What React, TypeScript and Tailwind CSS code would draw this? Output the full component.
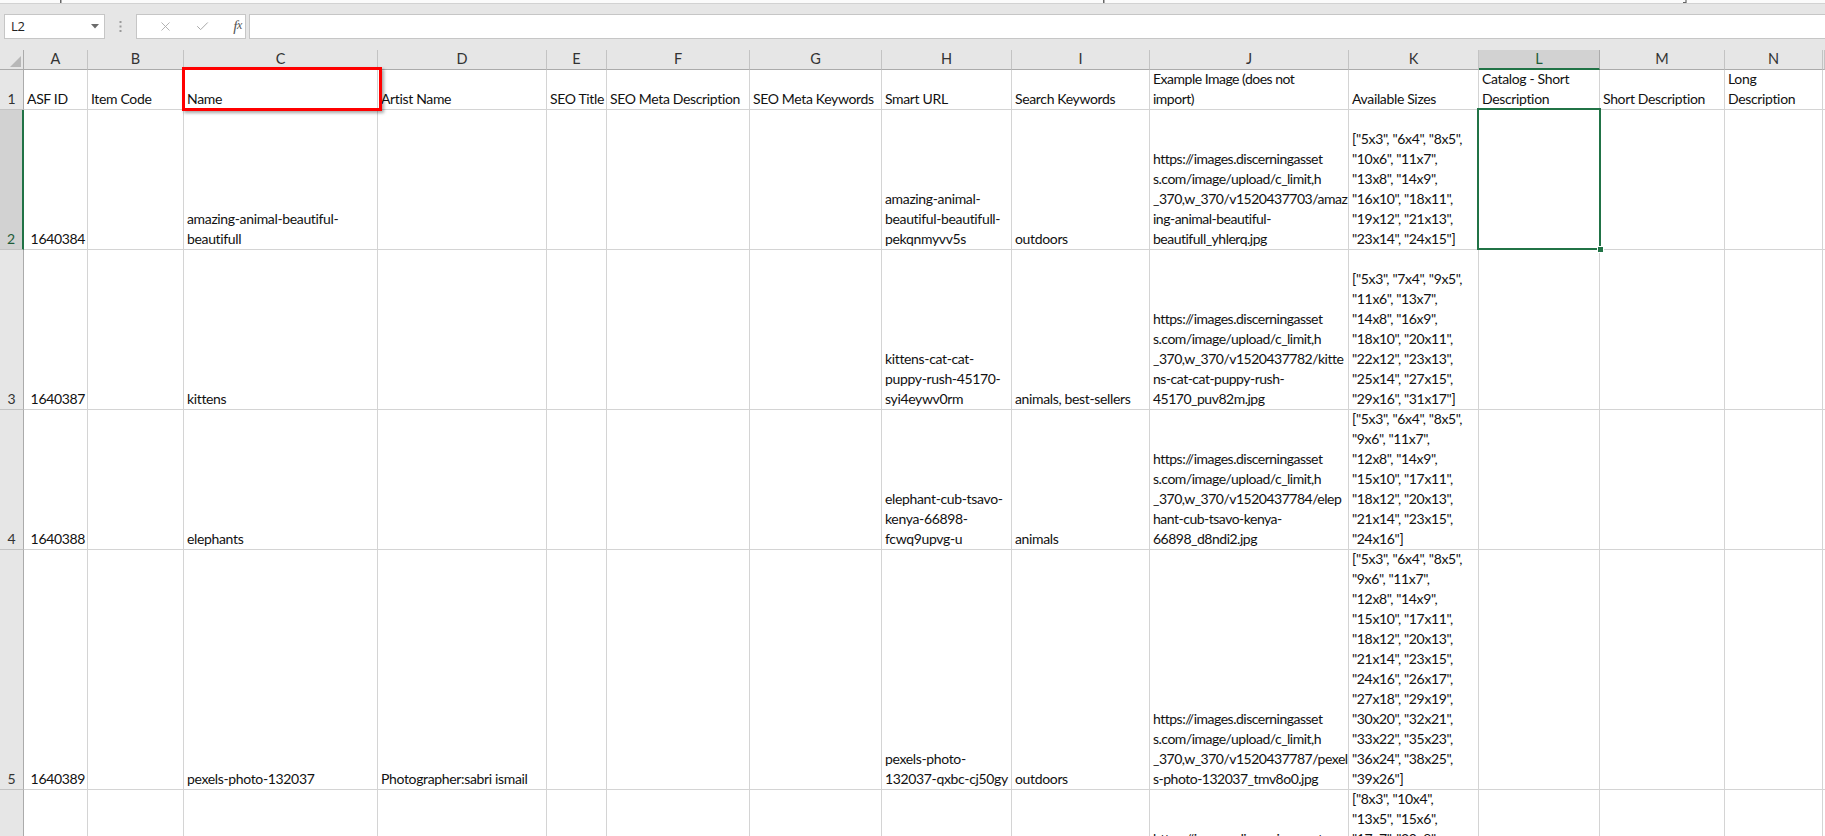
import React from "react";
import { X, Check } from "lucide-react";

type Cell = { lines: string[]; right?: boolean };
type Row = { label: string; height: string; cells: Record<number, Cell> };

const LETTERS = ["A", "B", "C", "D", "E", "F", "G", "H", "I", "J", "K", "L", "M", "N", ""];

const ROWS: Row[] = [
  {
    label: "1",
    height: "h-[40px]",
    cells: {
      0: { lines: ["ASF ID"] },
      1: { lines: ["Item Code"] },
      2: { lines: ["Name"] },
      3: { lines: ["Artist Name"] },
      4: { lines: ["SEO Title"] },
      5: { lines: ["SEO Meta Description"] },
      6: { lines: ["SEO Meta Keywords"] },
      7: { lines: ["Smart URL"] },
      8: { lines: ["Search Keywords"] },
      9: { lines: ["Example Image (does not", "import)"] },
      10: { lines: ["Available Sizes"] },
      11: { lines: ["Catalog - Short", "Description"] },
      12: { lines: ["Short Description"] },
      13: { lines: ["Long", "Description"] },
    },
  },
  {
    label: "2",
    height: "h-[140px]",
    cells: {
      0: { lines: ["1640384"], right: true },
      2: { lines: ["amazing-animal-beautiful-", "beautifull"] },
      7: { lines: ["amazing-animal-", "beautiful-beautifull-", "pekqnmyvv5s"] },
      8: { lines: ["outdoors"] },
      9: {
        lines: [
          "https://images.discerningasset",
          "s.com/image/upload/c_limit,h",
          "_370,w_370/v1520437703/amaz",
          "ing-animal-beautiful-",
          "beautifull_yhlerq.jpg",
        ],
      },
      10: {
        lines: [
          '["5x3", "6x4", "8x5",',
          '"10x6", "11x7",',
          '"13x8", "14x9",',
          '"16x10", "18x11",',
          '"19x12", "21x13",',
          '"23x14", "24x15"]',
        ],
      },
    },
  },
  {
    label: "3",
    height: "h-[160px]",
    cells: {
      0: { lines: ["1640387"], right: true },
      2: { lines: ["kittens"] },
      7: { lines: ["kittens-cat-cat-", "puppy-rush-45170-", "syi4eywv0rm"] },
      8: { lines: ["animals, best-sellers"] },
      9: {
        lines: [
          "https://images.discerningasset",
          "s.com/image/upload/c_limit,h",
          "_370,w_370/v1520437782/kitte",
          "ns-cat-cat-puppy-rush-",
          "45170_puv82m.jpg",
        ],
      },
      10: {
        lines: [
          '["5x3", "7x4", "9x5",',
          '"11x6", "13x7",',
          '"14x8", "16x9",',
          '"18x10", "20x11",',
          '"22x12", "23x13",',
          '"25x14", "27x15",',
          '"29x16", "31x17"]',
        ],
      },
    },
  },
  {
    label: "4",
    height: "h-[140px]",
    cells: {
      0: { lines: ["1640388"], right: true },
      2: { lines: ["elephants"] },
      7: { lines: ["elephant-cub-tsavo-", "kenya-66898-", "fcwq9upvg-u"] },
      8: { lines: ["animals"] },
      9: {
        lines: [
          "https://images.discerningasset",
          "s.com/image/upload/c_limit,h",
          "_370,w_370/v1520437784/elep",
          "hant-cub-tsavo-kenya-",
          "66898_d8ndi2.jpg",
        ],
      },
      10: {
        lines: [
          '["5x3", "6x4", "8x5",',
          '"9x6", "11x7",',
          '"12x8", "14x9",',
          '"15x10", "17x11",',
          '"18x12", "20x13",',
          '"21x14", "23x15",',
          '"24x16"]',
        ],
      },
    },
  },
  {
    label: "5",
    height: "h-[240px]",
    cells: {
      0: { lines: ["1640389"], right: true },
      2: { lines: ["pexels-photo-132037"] },
      3: { lines: ["Photographer:sabri ismail"] },
      7: { lines: ["pexels-photo-", "132037-qxbc-cj50gy"] },
      8: { lines: ["outdoors"] },
      9: {
        lines: [
          "https://images.discerningasset",
          "s.com/image/upload/c_limit,h",
          "_370,w_370/v1520437787/pexel",
          "s-photo-132037_tmv8o0.jpg",
        ],
      },
      10: {
        lines: [
          '["5x3", "6x4", "8x5",',
          '"9x6", "11x7",',
          '"12x8", "14x9",',
          '"15x10", "17x11",',
          '"18x12", "20x13",',
          '"21x14", "23x15",',
          '"24x16", "26x17",',
          '"27x18", "29x19",',
          '"30x20", "32x21",',
          '"33x22", "35x23",',
          '"36x24", "38x25",',
          '"39x26"]',
        ],
      },
    },
  },
  {
    label: "",
    height: "h-[140px]",
    cells: {
      9: {
        lines: [
          "https://images.discerningasset",
          "s.com/image/upload/c_limit,h",
          "_370,w_370/v1520437790/kitte",
          "ns-2-kitten-cat-",
          "71219_aq3nqk.jpg",
        ],
      },
      10: {
        lines: [
          '["8x3", "10x4",',
          '"13x5", "15x6",',
          '"17x7", "20x8",',
          '"22x9", "25x10",',
          '"27x11", "29x12",',
          '"32x13", "34x14",',
          '"36x15"]',
        ],
      },
    },
  },
];

const GRID =
  "grid grid-cols-[24px_64px_96px_194px_169px_60px_143px_132px_130px_138px_199px_130px_121px_125px_98px_1fr]";

function SelectAllCorner() {
  return (
    <div className="h-[20px] bg-[#e6e6e6] border-r border-b border-[#ababab] flex items-end justify-end pr-[2px] pb-[2px]">
      <svg width="11" height="11" viewBox="0 0 11 11">
        <polygon points="11,0 11,11 0,11" fill="#b8b8b8" />
      </svg>
    </div>
  );
}

function FormulaBar() {
  return (
    <div className="bg-[#e6e6e6]">
      {/* lower edge of the ribbon, with a few glyph tails showing */}
      <div className="h-[4px] bg-[#fbfbfb] border-b border-[#d2d2d2] flex items-start">
        <svg className="ml-[60px]" width="2" height="3" viewBox="0 0 2 3">
          <rect width="1.5" height="3" fill="#666" />
        </svg>
        <svg className="ml-[1041px]" width="2" height="3" viewBox="0 0 2 3">
          <rect width="1.5" height="3" fill="#666" />
        </svg>
        <svg className="ml-[578px]" width="4" height="3" viewBox="0 0 4 3">
          <path d="M0 2.5H3V0" stroke="#666" strokeWidth="1.2" fill="none" />
        </svg>
      </div>
      <div className="h-[10px]" />
      <div className="flex items-stretch h-[25px]">
        <div className="ml-[4px] w-[101px] bg-white border border-[#c6c6c6] flex items-center justify-between pl-[6px] pr-[5px]">
          <span className="text-[13px] text-[#222] font-['Open_Sans',sans-serif]">L2</span>
          <svg width="8" height="5" viewBox="0 0 8 5">
            <polygon points="0,0 8,0 4,4.5" fill="#6b6b6b" />
          </svg>
        </div>
        <div className="w-[31px] flex items-center justify-center">
          <svg width="3" height="11" viewBox="0 0 3 11">
            <rect x="0.5" y="0" width="2" height="2" fill="#9a9a9a" />
            <rect x="0.5" y="4.5" width="2" height="2" fill="#9a9a9a" />
            <rect x="0.5" y="9" width="2" height="2" fill="#9a9a9a" />
          </svg>
        </div>
        <div className="w-[110px] bg-white border border-[#c6c6c6] flex items-center">
          <span className="w-[36px] flex justify-end">
            <X size={15} strokeWidth={1.4} color="#a8a8a8" />
          </span>
          <span className="w-[37px] flex justify-end">
            <Check size={15} strokeWidth={1.6} color="#a8a8a8" />
          </span>
          <span className="w-[33px] flex justify-end pr-[1px] text-[15px] italic text-[#555] font-['Liberation_Serif',serif] leading-none">
            f<span className="text-[12px]">x</span>
          </span>
        </div>
        <div className="ml-[3px] flex-1 bg-white border border-[#c6c6c6] border-r-0" />
      </div>
      <div className="h-[11px]" />
    </div>
  );
}

export default function App() {
  return (
    <div className="w-[1825px] h-[836px] overflow-hidden bg-white font-['Lato',sans-serif] text-[14px] tracking-[-0.35px] text-[#111]">
      <FormulaBar />
      <div className="relative">
        {/* column letters */}
        <div className={`${GRID} text-[14.5px] tracking-normal`}>
          <SelectAllCorner />
          {LETTERS.map((l, i) => (
            <div
              key={i}
              className={
                i === 11
                  ? "h-[20px] bg-[#d2d2d2] border-r border-[#ababab] border-b-2 border-b-[#217346] flex items-center justify-center text-[#1e5c39] leading-none"
                  : "h-[20px] bg-[#e6e6e6] border-r border-b border-[#c3c3c3] border-b-[#ababab] flex items-center justify-center text-[#333] leading-none"
              }
            >
              {l}
            </div>
          ))}
        </div>

        {/* worksheet rows */}
        {ROWS.map((row, ri) => (
          <div key={ri} className={GRID}>
            <div
              className={
                row.label === "2"
                  ? `${row.height} bg-[#d2d2d2] border-b border-[#c3c3c3] border-r-2 border-r-[#217346] flex items-end justify-center text-[#1e5c39] leading-[20px] tracking-normal`
                  : `${row.height} bg-[#e6e6e6] border-b border-[#c3c3c3] border-r border-r-[#ababab] flex items-end justify-center text-[#333] leading-[20px] tracking-normal`
              }
            >
              {row.label}
            </div>
            {LETTERS.map((_, ci) => {
              const cell = row.cells[ci];
              return (
                <div
                  key={ci}
                  className={`${row.height} border-r border-b border-[#d4d4d4] flex flex-col justify-end overflow-hidden ${
                    cell?.right ? "items-end pr-[2px] pl-[3px]" : "items-start px-[3px]"
                  } ${ci === 9 ? "tracking-[-0.5px]" : ""}`}
                >
                  {cell?.lines.map((t, li) => (
                    <div key={li} className="leading-[20px] whitespace-pre">
                      {t}
                    </div>
                  ))}
                </div>
              );
            })}
          </div>
        ))}

        {/* active cell L2 */}
        <div className="absolute left-[1477px] top-[58px] w-[124px] h-[142px] border-2 border-[#217346] pointer-events-none">
          <div className="absolute -right-[5px] -bottom-[5px] w-[7px] h-[7px] bg-[#217346] border border-white" />
        </div>

        {/* highlight around the Name heading */}
        <div className="absolute left-[182px] top-[17px] w-[200px] h-[44px] border-[3px] border-[#ff0000] shadow-[2px_2px_3px_rgba(0,0,0,0.35)] pointer-events-none" />
      </div>
    </div>
  );
}
